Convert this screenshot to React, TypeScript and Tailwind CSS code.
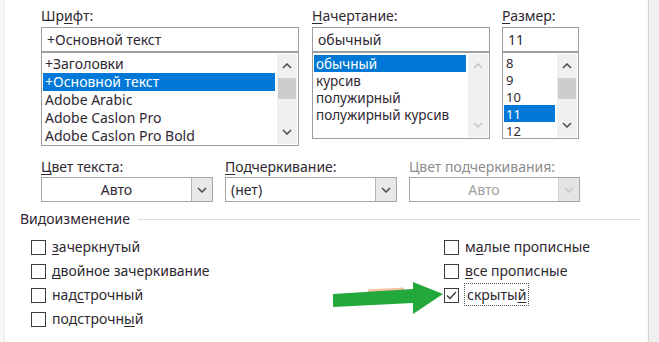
import type { ReactNode } from "react";

const TEXT = "text-[#2f2833]";

function U({ children }: { children: ReactNode }) {
  return <span className="underline underline-offset-[2px] decoration-1">{children}</span>;
}

function Chevron({ up, dim }: { up?: boolean; dim?: boolean }) {
  return (
    <svg width="10" height="6" viewBox="0 0 10 6" className="block">
      <polyline
        points={up ? "1,5 5,1 9,5" : "1,1 5,5 9,1"}
        fill="none"
        stroke={dim ? "#c4c4c4" : "#4a4a4a"}
        strokeWidth="1.5"
      />
    </svg>
  );
}

function ScrollBar({ thumb, dim }: { thumb?: boolean; dim?: boolean }) {
  return (
    <div className="w-[20px] my-px mr-px flex flex-col bg-[#f0f0f0]">
      <div className="h-[24px] flex items-center justify-center">
        <Chevron up dim={dim} />
      </div>
      <div className="flex-1">{thumb && <div className="mx-px h-[21px] bg-[#cdcdcd]" />}</div>
      <div className="h-[24px] flex items-center justify-center">
        <Chevron dim={dim} />
      </div>
    </div>
  );
}

function ListBox({
  items,
  selected,
  itemH,
  h,
  pad = "pt-[2px]",
  size = "",
  thumb,
}: {
  items: string[];
  selected: number;
  itemH: string;
  h: string;
  pad?: string;
  size?: string;
  thumb?: boolean;
}) {
  return (
    <div className={`${h} border border-[#9e9e9e] bg-white flex`}>
      <div className={`flex-1 ${pad} ${size} pl-px pr-[2px] overflow-hidden`}>
        {items.map((it, i) => (
          <div
            key={it}
            className={`${itemH} flex items-center px-[2px] whitespace-nowrap ${
              i === selected ? "bg-[#0078d7] text-white" : TEXT
            }`}
          >
            {it}
          </div>
        ))}
      </div>
      <ScrollBar thumb={thumb} dim={!thumb} />
    </div>
  );
}

function Field({ value }: { value: string }) {
  return (
    <div className={`h-[25px] border border-[#9e9e9e] bg-white flex items-center px-[5px] ${TEXT}`}>
      {value}
    </div>
  );
}

function Combo({ value, center, disabled }: { value: string; center?: boolean; disabled?: boolean }) {
  return (
    <div className="h-[25px] border border-[#a6a6a6] bg-white flex">
      <div
        className={`flex-1 flex items-center px-[5px] ${center ? "justify-center" : ""} ${
          disabled ? "text-[#a0a0a0]" : TEXT
        }`}
      >
        {value}
      </div>
      <div
        className={`w-[21px] border-l flex items-center justify-center ${
          disabled ? "bg-[#e4e4e4] border-[#d0d0d0]" : "bg-[#e8e8e8] border-[#b4b4b4]"
        }`}
      >
        <Chevron dim={disabled} />
      </div>
    </div>
  );
}

function Check({ label, checked }: { label: ReactNode; checked?: boolean }) {
  return (
    <div className="h-[24px] flex items-center">
      <div className="w-[15px] h-[15px] border border-[#3c3c3c] bg-white flex items-center justify-center">
        {checked && (
          <svg width="11" height="9" viewBox="0 0 11 9">
            <polyline points="1,4.5 4,7.5 10,1" fill="none" stroke="#3a3a3a" strokeWidth="1.3" />
          </svg>
        )}
      </div>
      <div className={`ml-[6px] ${TEXT}`}>{label}</div>
    </div>
  );
}

export default function App() {
  return (
    <div className="w-[659px] h-[342px] overflow-hidden bg-white flex font-['Noto_Sans',sans-serif] text-[14px] leading-4 relative">
      <div className="w-[5px] bg-[#f7f7f7] border-r border-[#ebebeb]" />
      <div className="w-[641px] pl-[15px] pr-[6px]">
        {/* Font / style / size */}
        <div className="pt-[8px] pl-[21px] flex gap-[13px]">
          <div className="w-[258px]">
            <div className={`h-[16px] ${TEXT}`}>
              Шр<U>и</U>фт:
            </div>
            <div className="mt-[3px]">
              <Field value="+Основной текст" />
              <ListBox
                h="h-[94px]"
                itemH="h-[18px]"
                thumb
                selected={1}
                items={["+Заголовки", "+Основной текст", "Adobe Arabic", "Adobe Caslon Pro", "Adobe Caslon Pro Bold"]}
              />
            </div>
          </div>
          <div className="w-[178px]">
            <div className={`h-[16px] ${TEXT}`}>
              <U>Н</U>ачертание:
            </div>
            <div className="mt-[3px]">
              <Field value="обычный" />
              <ListBox
                h="h-[87px]"
                itemH="h-[17px]"
                size="text-[13.5px]"
                selected={0}
                items={["обычный", "курсив", "полужирный", "полужирный курсив"]}
              />
            </div>
          </div>
          <div className="w-[77px] ml-[-1px]">
            <div className={`h-[16px] ${TEXT}`}>
              <U>Р</U>азмер:
            </div>
            <div className="mt-[3px]">
              <Field value="11" />
              <ListBox
                h="h-[87px]"
                itemH="h-[17px]"
                size="text-[13px]"
                pad="pt-px"
                thumb
                selected={3}
                items={["8", "9", "10", "11", "12"]}
              />
            </div>
          </div>
        </div>

        {/* Colour / underline */}
        <div className="mt-[13px] pl-[21px] flex gap-[12px]">
          <div className="w-[172px]">
            <div className={`h-[16px] ${TEXT}`}>
              <U>Ц</U>вет текста:
            </div>
            <div className="mt-[2px]">
              <Combo value="Авто" center />
            </div>
          </div>
          <div className="w-[172px]">
            <div className={`h-[16px] ${TEXT}`}>
              <U>П</U>одчеркивание:
            </div>
            <div className="mt-[2px]">
              <Combo value="(нет)" />
            </div>
          </div>
          <div className="w-[171px]">
            <div className="h-[16px] text-[#8c8c8c]">Цвет подчеркивания:</div>
            <div className="mt-[2px]">
              <Combo value="Авто" center disabled />
            </div>
          </div>
        </div>

        {/* Effects */}
        <div className="mt-[9px] h-[16px] flex items-center">
          <span className={TEXT}>Видоизменение</span>
          <div className="ml-[8px] flex-1 h-px bg-[#dcdcdc]" />
        </div>
        <div className="mt-[8px] pl-[11px] grid grid-cols-[413px_1fr]">
          <div>
            <Check label={<><U>з</U>ачеркнутый</>} />
            <Check label={<><U>д</U>войное зачеркивание</>} />
            <Check label={<>над<U>с</U>трочный</>} />
            <Check label={<>подстрочн<U>ы</U>й</>} />
          </div>
          <div>
            <Check label={<>м<U>а</U>лые прописные</>} />
            <Check label={<><U>в</U>се прописные</>} />
            <Check
              checked
              label={
                <span className="outline outline-1 outline-dotted outline-[#555] px-[2px] py-px">
                  скрыты<U>й</U>
                </span>
              }
            />
          </div>
        </div>
      </div>
      <div className="w-[2px] bg-[#fafafa]" />
      <div className="w-px bg-[#d2d2d2]" />
      <div className="flex-1 bg-[#f0f0f0]" />

      {/* Green pointer arrow */}
      <svg className="absolute left-[328px] top-[278px]" width="120" height="40" viewBox="328 278 120 40">
        <path d="M368 291 L404 289" stroke="#f2a77a" strokeWidth="3" opacity="0.7" />
        <polygon points="333,294 413,289 413,282 443,294 413,314 413,303 333,307" fill="#23a83b" />
      </svg>
    </div>
  );
}
